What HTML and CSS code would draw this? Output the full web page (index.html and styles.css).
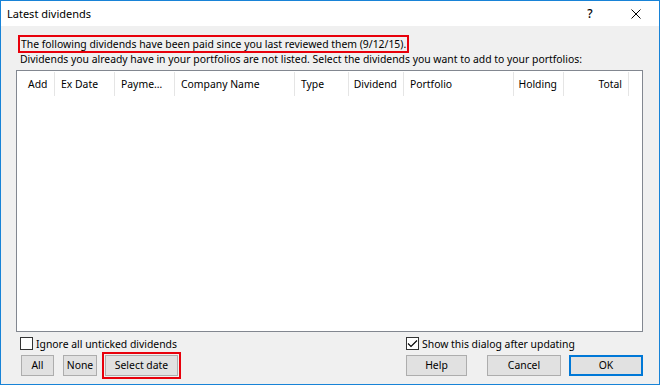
FILE: index.html
```html
<!DOCTYPE html>
<html>
<head>
<meta charset="utf-8">
<link rel="stylesheet" href="styles.css">
</head>
<body>
<div class="window">
  <div class="titlebar">
    <span class="title">Latest dividends</span>
    <span class="tb-btn help-btn">?</span>
    <span class="tb-btn">
      <svg width="10" height="10" viewBox="0 0 10 10"><path d="M0.5 0.5 L9.5 9.5 M9.5 0.5 L0.5 9.5" stroke="#000" stroke-width="1" fill="none"/></svg>
    </span>
  </div>
  <div class="content">
    <p class="intro first"><span class="highlight">The following dividends have been paid since you last reviewed them (9/12/15).</span></p>
    <p class="intro">Dividends you already have in your portfolios are not listed. Select the dividends you want to add to your portfolios:</p>
    <div class="list">
      <div class="header">
        <div class="col c-add">Add</div>
        <div class="col c-ex">Ex Date</div>
        <div class="col c-pay">Payme…</div>
        <div class="col c-co">Company Name</div>
        <div class="col c-type">Type</div>
        <div class="col c-div right">Dividend</div>
        <div class="col c-port">Portfolio</div>
        <div class="col c-hold right">Holding</div>
        <div class="col c-tot right">Total</div>
      </div>
    </div>
    <div class="row options">
      <label class="check left-check"><span class="box"></span>Ignore all unticked dividends</label>
      <label class="check"><span class="box"><svg width="11" height="11" viewBox="0 0 11 11"><path d="M1 5.5 L4 8.5 L10 2.5" stroke="#000" stroke-width="1.1" fill="none"/></svg></span>Show this dialog after updating</label>
    </div>
    <div class="row buttons">
      <div class="group left-group">
        <button class="btn b-all">All</button>
        <button class="btn b-none">None</button>
        <button class="btn b-sel">Select date</button>
      </div>
      <div class="group">
        <button class="btn b-help">Help</button>
        <button class="btn b-cancel">Cancel</button>
        <button class="btn b-ok">OK</button>
      </div>
    </div>
  </div>
</div>
</body>
</html>
```

FILE: styles.css
```css
* { box-sizing: border-box; }
html, body { margin: 0; padding: 0; background: #ffffff; }
body {
  font-family: "Noto Sans", "Open Sans", sans-serif;
  font-size: 10.4px;
  color: #000;
}
.window {
  width: 660px;
  height: 385px;
  border: 1px solid #1883d7;
  background: #f0f0f0;
  display: flex;
  flex-direction: column;
}
.titlebar {
  height: 25px;
  background: #ffffff;
  display: flex;
  align-items: center;
  flex: none;
}
.title {
  flex: 1;
  padding-left: 6px;
  font-size: 11px;
}
.tb-btn {
  width: 46px;
  height: 25px;
  display: flex;
  align-items: center;
  justify-content: center;
  font-size: 11px;
}
.help-btn {
  font-size: 12px;
  font-weight: 500;
}
.content {
  flex: 1;
  display: flex;
  flex-direction: column;
  padding: 0 16px 8px 15px;
}
.intro {
  margin: 0;
  line-height: 15px;
  height: 15px;
  white-space: nowrap;
  padding-left: 4px;
}
.intro.first { margin-top: 11px; }
.highlight {
  outline: 2px solid #e8000b;
  outline-offset: 0;
  padding-left: 1px;
  padding-right: 1px;
}
.list {
  margin-top: 3px;
  flex: 1;
  background: #ffffff;
  border: 1px solid #828790;
}
.header {
  display: grid;
  grid-template-columns: 38px 60px 60px 120px 54px 55px 110px 50px 65px;
  height: 25px;
}
.col {
  margin-top: 1px;
  border-right: 1px solid #e5e5e5;
  display: flex;
  align-items: center;
  padding-left: 6px;
  padding-right: 6px;
  white-space: nowrap;
  overflow: hidden;
}
.col.c-add { padding-left: 11px; }
.col.right { justify-content: flex-end; }
.row {
  display: grid;
  grid-template-columns: 1fr 237px;
}
.options {
  margin-top: 5px;
  height: 13px;
}
.check {
  display: flex;
  align-items: center;
  height: 13px;
  white-space: nowrap;
}
.left-check { margin-left: 4px; }
.box {
  width: 13px;
  height: 13px;
  border: 1px solid #333333;
  background: #ffffff;
  margin-right: 3px;
  display: flex;
  align-items: center;
  justify-content: center;
  flex: none;
}
.buttons {
  margin-top: 5px;
}
.group {
  display: flex;
  align-items: center;
}
.left-group { margin-left: 5px; }
.btn {
  font-family: inherit;
  font-size: 10.4px;
  color: #000;
  height: 21px;
  background: #e1e1e1;
  border: 1px solid #adadad;
  padding: 0;
  margin: 0;
  line-height: 19px;
}
.b-all { width: 33px; }
.b-none { width: 34px; margin-left: 9px; }
.b-sel { width: 73px; margin-left: 8px; outline: 2px solid #e8000b; outline-offset: 1px; }
.b-help { width: 61px; }
.b-cancel { width: 74px; margin-left: 20px; }
.b-ok { width: 74px; margin-left: 8px; border: 2px solid #0078d7; line-height: 17px; }
```
